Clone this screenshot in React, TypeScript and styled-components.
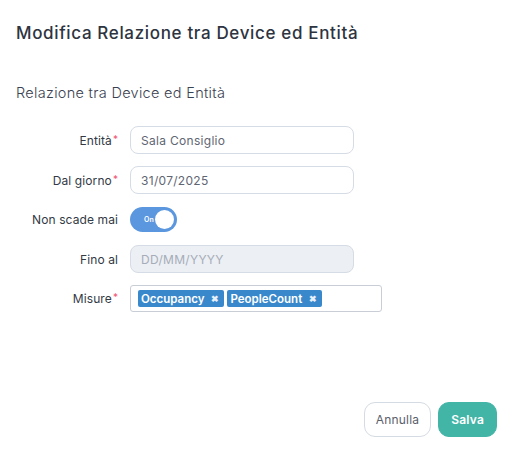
import React from "react";
import styled, { createGlobalStyle } from "styled-components";

const Global = createGlobalStyle`
  html, body { margin: 0; padding: 0; background: #fff; }
  body { font-family: "Inter", "Open Sans", sans-serif; }
  * { box-sizing: border-box; }
`;

const Dialog = styled.div`
  width: 510px;
  height: 449px;
  display: flex;
  flex-direction: column;
  background: #fff;
`;

const Header = styled.div`
  padding: 23px 16px 0;
  height: 61px;
`;

const Title = styled.h1`
  margin: 0;
  font-size: 17px;
  font-weight: 500;
  color: #2d3440;
  letter-spacing: 0.65px;
`;

const Body = styled.div`
  padding: 23px 16px 0 0;
`;

const SectionTitle = styled.h2`
  margin: 0 0 25px 16px;
  font-size: 14.5px;
  font-weight: 300;
  color: #3a4150;
  letter-spacing: 0.3px;
`;

const Form = styled.div`
  display: flex;
  flex-direction: column;
  gap: 12px;
`;

const Row = styled.div`
  display: grid;
  grid-template-columns: 118px 1fr;
  column-gap: 12px;
  align-items: center;
  min-height: 27px;
`;

const Label = styled.label`
  text-align: right;
  font-size: 12px;
  color: #333a45;
  font-weight: 400;
  letter-spacing: 0.1px;
`;

const Req = styled.span`
  color: #f0566f;
  font-size: 10px;
  vertical-align: top;
  margin-left: 1px;
`;

const Input = styled.div<{ $disabled?: boolean; $placeholder?: boolean }>`
  width: 224px;
  height: 28px;
  border: 1px solid #d6dce5;
  border-radius: 8px;
  padding: 0 10px;
  display: flex;
  align-items: center;
  font-size: 12px;
  letter-spacing: 0.3px;
  color: ${(p) => (p.$placeholder ? "#a6adb8" : "#5f6673")};
  background: ${(p) => (p.$disabled ? "#eceff4" : "#fff")};
`;

const Switch = styled.div`
  position: relative;
  width: 47px;
  height: 25px;
  border-radius: 13px;
  background: #5b97df;
  display: flex;
  align-items: center;
  padding-left: 14px;
`;

const SwitchText = styled.span`
  font-size: 7px;
  color: #fff;
  font-weight: 600;
`;

const Knob = styled.span`
  position: absolute;
  right: 3px;
  top: 3px;
  width: 19px;
  height: 19px;
  border-radius: 50%;
  background: #fff;
`;

const MultiSelect = styled.div`
  width: 252px;
  height: 27px;
  border: 1px solid #c9ced6;
  border-radius: 3px;
  display: flex;
  align-items: center;
  gap: 3px;
  padding: 0 7px;
`;

const Tag = styled.span`
  display: inline-flex;
  align-items: center;
  gap: 7px;
  height: 17px;
  padding: 0 5px 0 3px;
  background: #3a88cc;
  color: #fff;
  border-radius: 2px;
  font-size: 11.5px;
  font-weight: 600;
`;

const TagX = styled.span`
  font-size: 9px;
  font-weight: 700;
  color: #e8f0fa;
`;

const Footer = styled.div`
  margin-top: auto;
  display: flex;
  justify-content: flex-end;
  gap: 7px;
  padding: 0 13px 12px 0;
`;

const Button = styled.button<{ $primary?: boolean }>`
  height: 35px;
  border-radius: 11px;
  font-family: inherit;
  font-size: 12px;
  letter-spacing: 0.2px;
  padding: 0 ${(p) => (p.$primary ? "12px" : "11px")};
  border: 1px solid ${(p) => (p.$primary ? "#43b5a7" : "#d5dbe3")};
  background: ${(p) => (p.$primary ? "#43b5a7" : "#fff")};
  color: ${(p) => (p.$primary ? "#fff" : "#5a606b")};
  font-weight: ${(p) => (p.$primary ? 600 : 400)};
`;

export default function App() {
  return (
    <>
      <Global />
      <Dialog>
        <Header>
          <Title>Modifica Relazione tra Device ed Entità</Title>
        </Header>
        <Body>
          <SectionTitle>Relazione tra Device ed Entità</SectionTitle>
          <Form>
            <Row>
              <Label>
                Entità<Req>*</Req>
              </Label>
              <Input>Sala Consiglio</Input>
            </Row>
            <Row>
              <Label>
                Dal giorno<Req>*</Req>
              </Label>
              <Input>31/07/2025</Input>
            </Row>
            <Row>
              <Label>Non scade mai</Label>
              <Switch>
                <SwitchText>On</SwitchText>
                <Knob />
              </Switch>
            </Row>
            <Row>
              <Label>Fino al</Label>
              <Input $disabled $placeholder>
                DD/MM/YYYY
              </Input>
            </Row>
            <Row>
              <Label>
                Misure<Req>*</Req>
              </Label>
              <MultiSelect>
                <Tag>
                  Occupancy<TagX>✖</TagX>
                </Tag>
                <Tag>
                  PeopleCount<TagX>✖</TagX>
                </Tag>
              </MultiSelect>
            </Row>
          </Form>
        </Body>
        <Footer>
          <Button>Annulla</Button>
          <Button $primary>Salva</Button>
        </Footer>
      </Dialog>
    </>
  );
}
